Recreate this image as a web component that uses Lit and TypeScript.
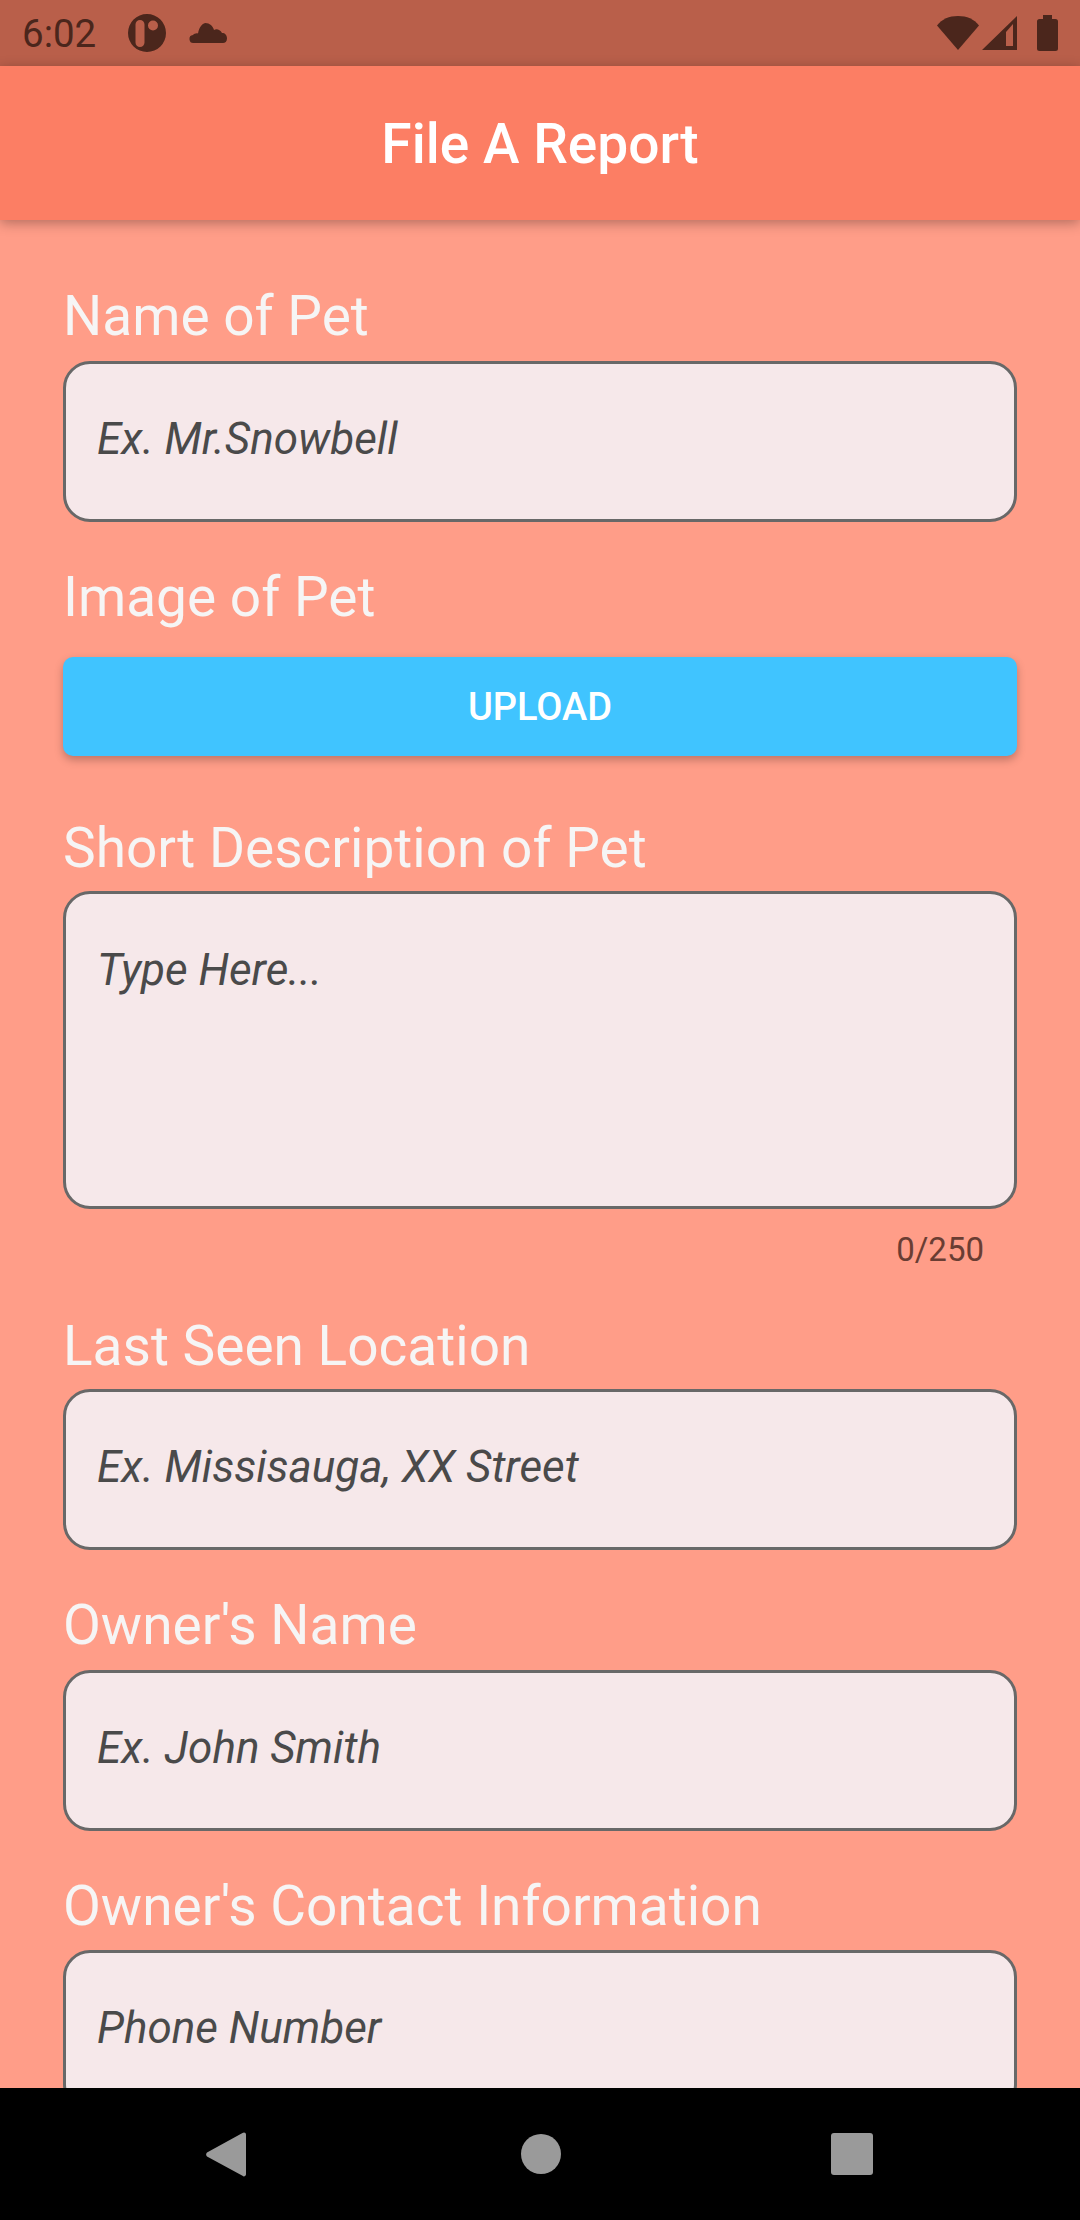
import { LitElement, html, css } from 'lit';
import { customElement } from 'lit/decorators.js';

@customElement('app-root')
export class AppRoot extends LitElement {
  static styles = css`
    :host {
      display: block;
      width: 1080px;
      height: 2220px;
      overflow: hidden;
      font-family: Roboto, sans-serif;
    }
    .screen {
      height: 2220px;
      display: flex;
      flex-direction: column;
      background: #ff9d88;
    }
    .status {
      height: 66px;
      flex: none;
      display: flex;
      align-items: center;
      padding: 0 22px;
      background: #b95f4a;
      color: #4b261c;
    }
    .time {
      font-size: 38.5px;
      font-weight: 400;
      width: 106px;
    }
    .status svg {
      display: block;
      fill: #4b261c;
    }
    .status .cloud {
      margin-left: 23px;
    }
    .status .signal {
      margin-left: 3px;
    }
    .status .battery {
      margin-left: 20px;
    }
    .spacer {
      flex: 1;
    }
    .appbar {
      height: 152px;
      padding-top: 2px;
      flex: none;
      display: flex;
      align-items: center;
      justify-content: center;
      background: #fc7e64;
      box-shadow: 0 3px 12px rgba(0, 0, 0, 0.3);
      color: #fff;
      font-size: 55.1px;
      font-weight: 500;
      position: relative;
    }
    .form {
      flex: 1;
      min-height: 0;
      overflow: hidden;
      display: flex;
      flex-direction: column;
      padding: 0 63px;
    }
    .label {
      font-size: 55px;
      font-weight: 400;
      color: #f6f5f5;
      line-height: 62px;
      flex: none;
      margin: 44px 0 13px;
    }
    .label.first {
      margin-top: 65px;
      margin-bottom: 14px;
    }
    .label.image {
      margin-bottom: 29px;
    }
    .label.desc {
      margin-top: 61px;
      margin-bottom: 12px;
    }
    .label.seen {
      margin-top: 47px;
      margin-bottom: 12px;
    }
    .label.owner {
      margin-bottom: 14px;
    }
    .field {
      flex: none;
      box-sizing: border-box;
      height: 161px;
      border: 3px solid #686868;
      border-radius: 27px;
      background: #f6e8ea;
      padding: 0 30px 6px 31px;
      display: flex;
      align-items: center;
      font-size: 44px;
      font-style: italic;
      color: #4a4a4a;
    }
    .field.area {
      height: 318px;
      align-items: flex-start;
      padding-top: 50px;
    }
    .upload {
      flex: none;
      height: 99px;
      border-radius: 10px;
      background: #40c4ff;
      box-shadow: 0 4px 8px rgba(0, 0, 0, 0.25);
      display: flex;
      align-items: center;
      justify-content: center;
      color: #fff;
      font-size: 38px;
      font-weight: 500;
    }
    .counter {
      flex: none;
      text-align: right;
      padding: 22px 33px 0 0;
      font-size: 33px;
      line-height: 37px;
      color: #6a3d33;
    }
    .nav {
      height: 132px;
      flex: none;
      background: #000;
      display: flex;
      align-items: center;
      padding-left: 206px;
    }
    .nav svg {
      display: block;
      fill: #9a9a9a;
    }
    .nav .home {
      margin-left: 275px;
    }
    .nav .recent {
      margin-left: 270px;
    }
  `;

  render() {
    return html`
      <div class="screen">
        <div class="status">
          <span class="time">6:02</span>
          <svg width="38" height="38" viewBox="0 0 38 38">
            <path fill-rule="evenodd" d="M19 0a19 19 0 1 1 0 38a19 19 0 0 1 0-38zM12 6a4.500 4.500 0 0 0-4.500 4.500v18a4.500 4.500 0 0 0 9 0v-18a4.500 4.500 0 0 0-4.500-4.500zM25 6.500a5 5 0 1 0 0 10a5 5 0 0 0 0-10z"/>
          </svg>
          <svg class="cloud" width="38" height="22" viewBox="0 0 38 22">
            <path d="M5 21a4 4 0 0 1-1-8c1-1 3-2 5-1.500C10 5 14 1 16.500 1c4 0 7.500 3 8.500 7c2-1.500 6-1 8 3c3 0 5 2 5 5.500c0 3-2 4.500-4 4.500z"/>
          </svg>
          <span class="spacer"></span>
          <svg width="42" height="34" viewBox="0 0 42 34">
            <path d="M0 9.500C5 3 12 0 21 0s16 3 21 9.500L21 34z"/>
          </svg>
          <svg class="signal" width="35" height="34" viewBox="0 0 35 34">
            <path fill-rule="evenodd" d="M35 0v34H0zM31 8l-7 8v14h7z"/>
          </svg>
          <svg class="battery" width="21" height="36" viewBox="0 0 21 36">
            <path d="M6 0h9v4h3.500A2.500 2.500 0 0 1 21 6.500v27a2.500 2.500 0 0 1-2.500 2.500h-16A2.500 2.500 0 0 1 0 33.500v-27A2.500 2.500 0 0 1 2.500 4H6z"/>
          </svg>
        </div>
        <div class="appbar">File A Report</div>
        <div class="form">
          <div class="label first">Name of Pet</div>
          <div class="field">Ex. Mr.Snowbell</div>
          <div class="label image">Image of Pet</div>
          <div class="upload">UPLOAD</div>
          <div class="label desc">Short Description of Pet</div>
          <div class="field area">Type Here...</div>
          <div class="counter">0/250</div>
          <div class="label seen">Last Seen Location</div>
          <div class="field">Ex. Missisauga, XX Street</div>
          <div class="label owner">Owner's Name</div>
          <div class="field">Ex. John Smith</div>
          <div class="label">Owner's Contact Information</div>
          <div class="field">Phone Number</div>
        </div>
        <div class="nav">
          <svg width="40" height="45" viewBox="0 0 40 45">
            <path d="M38 0.500a2 2 0 0 1 2 2v40a2 2 0 0 1-3.500 1.200L1 24.500a3 3 0 0 1 0-4L36.500 1z"/>
          </svg>
          <svg class="home" width="40" height="40" viewBox="0 0 40 40">
            <circle cx="20" cy="20" r="20"/>
          </svg>
          <svg class="recent" width="42" height="42" viewBox="0 0 42 42">
            <rect width="42" height="42" rx="3"/>
          </svg>
        </div>
      </div>
    `;
  }
}
